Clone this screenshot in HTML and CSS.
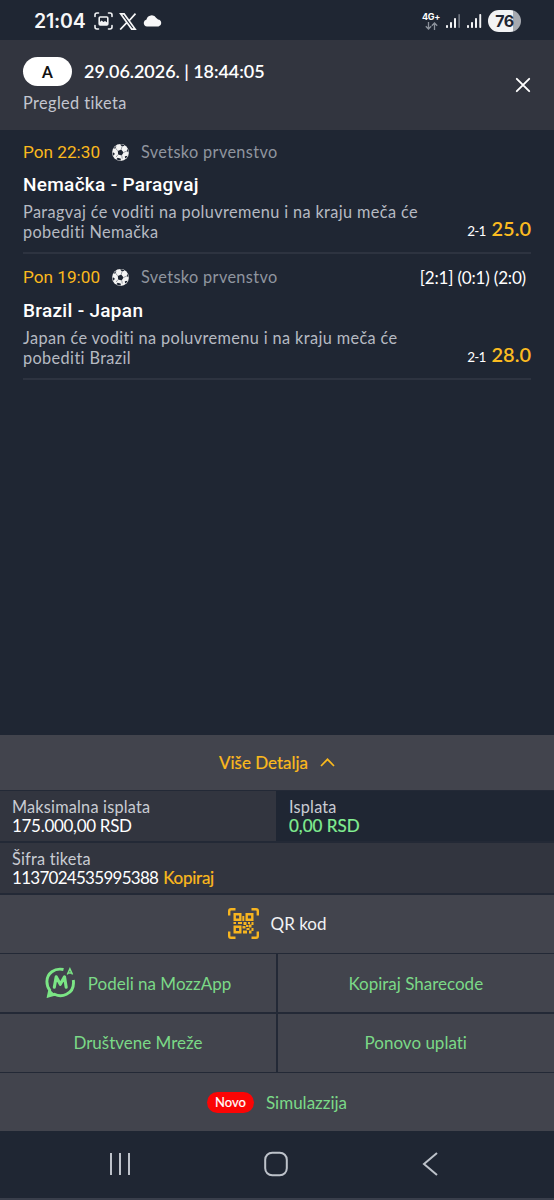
FILE: index.html
```
<!DOCTYPE html>
<html lang="sr">
<head>
<meta charset="utf-8">
<title>Pregled tiketa</title>
<link rel="stylesheet" href="styles.css">
</head>
<body>
<svg width="0" height="0" class="defs">
  <symbol id="ball" viewBox="0 0 16 16">
    <circle cx="8" cy="8" r="7.900" fill="#f4f4f4"/>
    <g transform="rotate(14 8 8)">
    <path fill="#1f2633" d="M8 5.200l2.800 2-1.100 3.200H6.300L5.200 7.200zM5.800.9 8 2.300 10.200.9 9.300.4H6.700zM.8 6.400 2.400 5.100 2.800 2.900 1.500 4.400zM15.200 6.400 13.600 5.100 13.200 2.900 14.500 4.400zM2.400 12.500 3.200 10.500.8 9.400 1.300 11.200zM13.600 12.500 12.800 10.500 15.200 9.400 14.700 11.200zM5.800 15.200 6.500 13.500 9.500 13.500 10.200 15.200 8 15.500z"/>
    <path stroke="#59606b" stroke-width=".5" fill="none" d="M8 5V2.300M11 7.100l2.800-2.200M9.900 10.500l1.100 2.700M6.200 10.500 5 13.200M5 7.100 2.200 4.900"/>
    </g>
  </symbol>
</svg>
<div class="screen">
  <div class="status">
    <div class="status-left">
      <span class="clock">21:04</span>
      <svg class="i-shot" width="19" height="18" viewBox="0 0 19 18"><g fill="none" stroke="#f2f3f5" stroke-width="1.600" stroke-linecap="round"><path d="M1 4.500V3a2 2 0 0 1 2-2h1.500M14.500 1H16a2 2 0 0 1 2 2v1.500M18 13.500V15a2 2 0 0 1-2 2h-1.500M4.500 17H3a2 2 0 0 1-2-2v-1.500"/><rect x="5.200" y="5" width="8.600" height="8" rx="1"/></g><path fill="#f2f3f5" d="M5 13v-2l2.500-2.500 2 1.500 1.500-1 3 2v2z"/></svg>
      <svg class="i-x" width="18" height="17" viewBox="0 0 18 17"><path fill="none" stroke="#f7f7f8" stroke-width="1.700" d="M1.700.900h3.400l11 15.200h-3.400zM16.500.6 10.100 7.700M7.800 9.600 1.200 16.500"/></svg>
      <svg class="i-cloud" width="19" height="12" viewBox="0 0 19 12"><path fill="#f7f7f8" d="M4 11.500a3.500 3.500 0 0 1-.5-6.900A5.300 5.300 0 0 1 13.300 3a4 4 0 0 1 1.700 1.600A3.500 3.500 0 0 1 15.500 11.500z"/></svg>
    </div>
    <div class="status-right">
      <div class="net"><span>4G+</span><svg width="13" height="8" viewBox="0 0 13 8"><path fill="none" stroke="#8b919b" stroke-width="1.300" d="M3.500 0v7M.8 4.200 3.500 7l2.700-2.800M9.500 8V1M6.800 3.800 9.500 1l2.700 2.800"/></svg></div>
      <svg class="i-sig" width="15" height="16" viewBox="0 0 15 16"><g fill="#f2f3f5"><rect x="0" y="12" width="2" height="3" rx=".8"/><rect x="4" y="9" width="2" height="6" rx=".8"/><rect x="8" y="5" width="2" height="10" rx=".8"/></g><rect x="12.300" y="1" width="1.700" height="14" rx=".8" fill="#6d737e"/></svg>
      <svg class="i-sig" width="15" height="16" viewBox="0 0 15 16"><g fill="#f2f3f5"><rect x="0" y="12" width="2" height="3" rx=".8"/><rect x="4" y="9" width="2" height="6" rx=".8"/><rect x="8" y="5" width="2" height="10" rx=".8"/><rect x="12.300" y="1" width="1.900" height="14" rx=".8"/></g></svg>
      <div class="battery">76</div>
    </div>
  </div>

  <header class="header">
    <div class="header-main">
      <div class="header-line"><span class="badge">A</span><span class="stamp">29.06.2026. | 18:44:05</span></div>
      <div class="subtitle">Pregled tiketa</div>
    </div>
    <svg class="i-close" width="16" height="16" viewBox="0 0 16 16"><path d="M1.800 1.800l12.400 12.400M14.200 1.800l-12.400 12.400" stroke="#fff" stroke-width="1.900" stroke-linecap="round"/></svg>
  </header>

  <main class="list">
    <article class="match">
      <div class="meta"><span class="when">Pon 22:30</span><svg width="17" height="17"><use href="#ball"/></svg><span class="league">Svetsko prvenstvo</span></div>
      <h2 class="teams">Nemačka - Paragvaj</h2>
      <div class="bet"><p class="desc">Paragvaj će voditi na poluvremenu i na kraju meča će<br>pobediti Nemačka</p><div class="pick"><span class="code">2-1</span><b class="odd">25.0</b></div></div>
    </article>
    <article class="match">
      <div class="meta"><span class="when">Pon 19:00</span><svg width="17" height="17"><use href="#ball"/></svg><span class="league">Svetsko prvenstvo</span><span class="score">[2:1] (0:1) (2:0)</span></div>
      <h2 class="teams">Brazil - Japan</h2>
      <div class="bet"><p class="desc">Japan će voditi na poluvremenu i na kraju meča će<br>pobediti Brazil</p><div class="pick"><span class="code">2-1</span><b class="odd">28.0</b></div></div>
    </article>
  </main>

  <section class="panel">
    <div class="more"><span>Više Detalja</span><svg width="15" height="9" viewBox="0 0 15 9"><path d="M1 8 7.500 1.300 14 8" fill="none" stroke="#fbb91d" stroke-width="1.700"/></svg></div>
    <div class="payouts">
      <div class="cell"><span class="label">Maksimalna isplata</span><span class="value v-max">175.000,00 RSD</span></div>
      <div class="cell dark"><span class="label">Isplata</span><span class="value win">0,00 RSD</span></div>
    </div>
    <div class="cell code-row"><span class="label">Šifra tiketa</span><span class="value"><span class="ticket">1137024535995388</span><span class="copy">Kopiraj</span></span></div>
    <div class="btn qr">
      <svg width="31" height="31" viewBox="0 0 31 31"><g fill="none" stroke="#f7b51f" stroke-width="2.400"><path d="M1.200 7.500V3a1.800 1.800 0 0 1 1.800-1.800h4.500M23.500 1.200H28A1.800 1.800 0 0 1 29.800 3v4.500M29.800 23.500V28a1.800 1.800 0 0 1-1.800 1.800h-4.500M7.500 29.800H3A1.800 1.800 0 0 1 1.200 28v-4.500"/><path d="M6.700 6.200h5.600v5.600H6.700zM18.700 6.200h5.600v5.600h-5.600zM6.700 18.700h5.600v5.600H6.700z"/></g><path fill="#f7b51f" d="M14.300 8h2v5h-2zM5.500 14h2.500v2H5.500zM10 14h4v2h-4zM15.500 14h3v3h-3zM20 14h2v2h-2zM23.500 14h2v3h-2zM18 17h2.500v2H18zM21 16.500h2.500v3H21zM14.500 18h3v2.500h-3zM18.500 20h3v2h-3zM23.500 20h2v3h-2zM15 22.500h4v3h-4zM21 22.500h2.500v3H21z"/></svg>
      <span>QR kod</span>
    </div>
    <div class="pair">
      <div class="btn mozz"><svg width="31" height="32" viewBox="0 0 31 32"><path fill="none" stroke="#7be585" stroke-width="2.900" d="M18.500 2.500C9.500.5 2 6.500 1.900 14.500c0 4 1.200 6.500 2.800 8.600L3.500 29l6-1.700c3.500 1.600 8.500 1.600 12 0 5-2.300 7.700-7.500 6.800-14.300"/><path fill="#7be585" d="m4.500 22.500 5 4.600-7.500 3.700z"/><path fill="none" stroke="#7be585" stroke-width="3.100" stroke-linejoin="round" stroke-linecap="round" d="M9.300 20.300 11.200 9.800 15.300 17.300l4.200-7.500L21.200 20.300"/><path fill="none" stroke="#7be585" stroke-width="1.500" d="M22.300 7.500 24.900 1.900 27.500 7.500M23.300 6h3.200"/></svg><span>Podeli na MozzApp</span></div>
      <div class="btn"><span>Kopiraj Sharecode</span></div>
    </div>
    <div class="pair">
      <div class="btn"><span>Društvene Mreže</span></div>
      <div class="btn"><span>Ponovo uplati</span></div>
    </div>
    <div class="btn sim"><span class="new">Novo</span><span>Simulazzija</span></div>
  </section>

  <nav class="nav">
    <svg width="24" height="24" viewBox="0 0 24 24"><path d="M3 1v22M12 1v22M21 1v22" stroke="#bdc2ca" stroke-width="2"/></svg>
    <svg width="24" height="26" viewBox="0 0 24 26"><rect x="1.200" y="1.700" width="21.600" height="22.600" rx="7" fill="none" stroke="#bdc2ca" stroke-width="2"/></svg>
    <svg width="24" height="26" viewBox="0 0 24 26"><path d="M18 2 5 13l13 11" fill="none" stroke="#bdc2ca" stroke-width="2"/></svg>
  </nav>
</div>
</body>
</html>
```
FILE: styles.css
```
* { box-sizing: border-box; }
body, h2, p { margin: 0; }
body { background: #1f2633; color: #fff; font: 16.3px/19px Lato, "Open Sans", sans-serif; font-variant-ligatures: none; }
svg { display: block; flex: none; }
span, b { white-space: nowrap; }
.defs { position: absolute; }
.screen { width: 554px; height: 1200px; display: flex; flex-direction: column; border-bottom: 2px solid #393e4b; }

.status { height: 40px; flex: none; display: flex; justify-content: space-between; padding: 2px 33px 0 34px; }
.status-left, .status-right { display: flex; align-items: center; }
.clock { font: 600 19.500px/24px Inter, sans-serif; width: 60px; letter-spacing: -.2px; color: #f7f7f8; }
.i-x { margin-left: 6px; }
.i-cloud { margin-left: 6px; }
.net { display: flex; flex-direction: column; align-items: center; width: 18px; font: 700 9px/9px Inter, sans-serif; letter-spacing: -.3px; margin-right: 6px; gap: 1px; }
.i-sig { margin-right: 6px; }
.battery { width: 33px; height: 22px; border-radius: 11px; background: linear-gradient(90deg, #f2f3f5 75%, #a6a9b0 75%); color: #1f2633; font: 700 16px/22px Inter, sans-serif; letter-spacing: -.4px; text-align: center; }

.header { height: 90px; flex: none; background: #32353f; display: flex; justify-content: space-between; padding: 17px 23px 0; }
.header-line { display: flex; align-items: center; gap: 12px; height: 29px; }
.badge { width: 49px; height: 29px; border-radius: 15px; background: #fff; color: #111; font: 500 17px/30px Roboto, sans-serif; text-align: center; }
.stamp { font: 600 18px/24px Lato, sans-serif; letter-spacing: -.05px; margin-top: -1px; }
.subtitle { margin-top: 7px; color: #c3c6cf; letter-spacing: .4px; }
.i-close { margin: 20px 0 0; }

.list { flex: 1; padding: 0 23px; }
.match { height: 125.500px; padding-top: 12px; border-bottom: 2px solid #2d3340; }
.match:first-child { height: 124px; }
.match + .match { padding-top: 13px; }
.meta { display: flex; align-items: center; height: 20px; }
.when { width: 89px; color: #fbb91d; font: 17.200px/20px Roboto, sans-serif; margin-top: -1px; }
.league { margin: -1px 0 0 12px; color: #8f959f; letter-spacing: .36px; }
.score { margin-left: auto; margin-right: 5px; font-size: 17px; letter-spacing: -.17px; }
.teams { font: 500 19px/24px Roboto, sans-serif; letter-spacing: .3px; margin-top: 11px; }
.match + .match .teams { margin-top: 12px; }
.bet { display: flex; justify-content: space-between; align-items: flex-end; margin-top: 5px; }
.desc { color: #b6bac2; line-height: 19.500px; letter-spacing: .38px; white-space: nowrap; }
.pick { display: flex; align-items: baseline; gap: 6px; line-height: 22px; margin-bottom: -1px; }
.code { font-size: 13.500px; letter-spacing: -.8px; }
.odd { font-size: 20px; font-weight: 600; color: #fbbb21; }

.panel { flex: none; display: flex; flex-direction: column; gap: 1.500px; background: #232936; }
.more { height: 54.500px; background: #42444d; display: flex; align-items: center; justify-content: center; gap: 12px; color: #fbb91d; font-size: 17px; -webkit-text-stroke: .2px; }
.payouts { display: grid; grid-template-columns: 276px 1fr; }
.cell { height: 50px; background: #32353f; padding: 6px 12px 0; display: flex; flex-direction: column; }
.dark { background: #1f2633; padding-left: 13px; }
.code-row { height: 50.500px; }
.label { color: #c9ccd3; line-height: 20px; letter-spacing: .2px; }
.value { font-size: 17px; line-height: 18px; display: flex; gap: 5px; }
.v-max { letter-spacing: -.3px; }
.win { color: #82ef92; -webkit-text-stroke: .2px; }
.ticket { letter-spacing: -.72px; }
.copy { color: #fbb91d; letter-spacing: -.25px; -webkit-text-stroke: .2px; }
.btn { height: 58px; background: #42444d; display: flex; align-items: center; justify-content: center; color: #7bd987; font-size: 17px; }
.qr { color: #f1f2f4; gap: 12px; }
.pair { display: grid; grid-template-columns: 276px 1fr; column-gap: 1.500px; }
.mozz { gap: 12px; }
.sim { gap: 12px; }
.new { width: 47px; height: 21px; border-radius: 11px; background: #fb0505; color: #fff; font: 13px/21px Lato, sans-serif; -webkit-text-stroke: .2px; text-align: center; }

.nav { height: 67px; flex: none; display: flex; align-items: center; justify-content: space-between; padding: 0 111px 2px 108px; }
```
